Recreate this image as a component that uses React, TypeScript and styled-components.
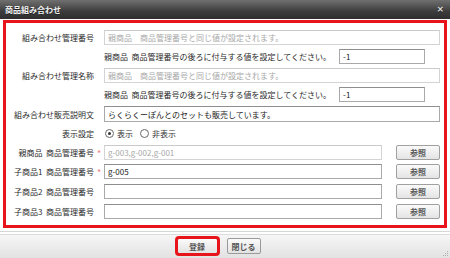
import React, { FC } from "react";
import styled, { createGlobalStyle } from "styled-components";

const GlobalStyle = createGlobalStyle`
  html, body { margin: 0; padding: 0; background: #fff; }
  body { font-family: "Noto Sans CJK JP", "Noto Sans", sans-serif; font-size: 8px; color: #333; }
  * { box-sizing: border-box; }
`;

const Window = styled.div`
  width: 450px;
  height: 258px;
  display: flex;
  flex-direction: column;
  background: #fff;
  overflow: hidden;
  position: relative;
`;

const TitleBar = styled.div`
  height: 19px;
  flex: none;
  display: flex;
  align-items: center;
  justify-content: space-between;
  padding: 0 6px 0 5px;
  background: linear-gradient(#707070, #3c3c3c 60%, #2e2e2e);
  color: #f2f2f2;
  font-weight: bold;
  font-size: 8px;
  text-shadow: 0 1px 0 #222;
`;

const CloseMark = styled.span`
  font-family: "DejaVu Sans", sans-serif;
  font-size: 9px;
  color: #ddd;
  line-height: 1;
`;

const Body = styled.div`
  flex: none;
  padding: 1px 3px 3px 3px;
  border-bottom: 1px solid #d6d6d6;
`;

const Highlight = styled.div`
  border: 3px solid #e8141c;
  height: 208px;
  padding: 7px 4px 0 0;
  display: flex;
  flex-direction: column;
  gap: 4px;
`;

const Row = styled.div<{ $h?: number; $mt?: number }>`
  display: grid;
  grid-template-columns: 88px 10px 1fr;
  align-items: center;
  height: ${(p) => p.$h ?? 15}px;
  margin-top: ${(p) => p.$mt ?? 0}px;
`;

const Label = styled.div`
  text-align: right;
  white-space: nowrap;
  color: #2a2a2a;
`;

const Required = styled.span`
  color: #f08080;
  text-align: center;
  font-size: 9px;
  padding-top: 2px;
`;

const Field = styled.div`
  display: flex;
  align-items: center;
  gap: 8px;
  height: 100%;
  min-width: 0;
`;

const Input = styled.input<{ $w?: number; $muted?: boolean }>`
  height: 100%;
  width: ${(p) => (p.$w ? `${p.$w}px` : "auto")};
  flex: ${(p) => (p.$w ? "none" : "1")};
  min-width: 0;
  margin: 0;
  padding: 0 3px;
  font-family: inherit;
  font-size: 8px;
  color: ${(p) => (p.$muted ? "#a8a8a8" : "#222")};
  background: #fff;
  border: 1px solid ${(p) => (p.$muted ? "#d4d4d4" : "#a9a9a9")};
  border-top-color: ${(p) => (p.$muted ? "#cacaca" : "#8e8e8e")};
  border-radius: 0;
  outline: none;
  &::placeholder { color: #a8a8a8; }
`;

const Hint = styled.span`
  white-space: nowrap;
  color: #2a2a2a;
`;

const RefButton = styled.button`
  flex: none;
  width: 44px;
  height: 15px;
  margin: 0 0 0 6px;
  padding: 0;
  font-family: inherit;
  font-size: 8px;
  font-weight: bold;
  color: #555;
  background: linear-gradient(#fafafa, #e4e4e4);
  border: 1px solid #a0a0a0;
  border-radius: 2px;
`;

const RadioGroup = styled.div`
  display: flex;
  align-items: center;
  gap: 3px;
  height: 100%;
`;

const RadioDot = styled.span<{ $on?: boolean }>`
  width: 9px;
  height: 9px;
  border-radius: 50%;
  border: 1px solid #6a6a6a;
  background: #fff;
  display: inline-flex;
  align-items: center;
  justify-content: center;
  margin-left: ${(p) => (p.$on ? 1 : 4)}px;
  &::after {
    content: "";
    width: 3px;
    height: 3px;
    border-radius: 50%;
    background: ${(p) => (p.$on ? "#333" : "transparent")};
  }
`;

const Footer = styled.div`
  flex: 1;
  margin-top: 2px;
  display: flex;
  align-items: center;
  justify-content: center;
  gap: 9px;
  padding: 0 13px 1px 0;
  background: linear-gradient(#f6f6f6, #e2e2e2);
  border-top: 1px solid #dcdcdc;
  position: relative;
`;

const FooterButton = styled.button<{ $w: number; $marked?: boolean }>`
  width: ${(p) => p.$w}px;
  height: 16px;
  margin: 0;
  padding: 0;
  font-family: inherit;
  font-size: 8px;
  font-weight: bold;
  color: #555;
  background: linear-gradient(#fbfbfb, #e2e2e2);
  border: 1px solid #9a9a9a;
  border-radius: 2px;
  outline: ${(p) => (p.$marked ? "3px solid #e8141c" : "none")};
  outline-offset: -1px;
`;

const Grip = styled.svg`
  position: absolute;
  right: 1px;
  bottom: 1px;
`;

interface RefRowProps {
  label: string;
  required?: boolean;
  value?: string;
  muted?: boolean;
  mt?: number;
}

const RefRow: FC<RefRowProps> = ({ label, required, value, muted, mt }) => (
  <Row $mt={mt}>
    <Label>{label}</Label>
    {required ? <Required>*</Required> : <span />}
    <Field>
      <Input $muted={muted} defaultValue={value} readOnly={muted} />
      <RefButton>参照</RefButton>
    </Field>
  </Row>
);

const HintRow: FC = () => (
  <Row>
    <span />
    <span />
    <Field>
      <Hint>親商品&nbsp;&nbsp;商品管理番号の後ろに付与する値を設定してください。</Hint>
      <Input $w={86} defaultValue="-1" />
    </Field>
  </Row>
);

export default function App() {
  return (
    <>
      <GlobalStyle />
      <Window>
        <TitleBar>
          <span>商品組み合わせ</span>
          <CloseMark>×</CloseMark>
        </TitleBar>
        <Body>
          <Highlight>
            <Row>
              <Label>組み合わせ管理番号</Label>
              <span />
              <Field>
                <Input $muted readOnly placeholder="親商品　商品管理番号と同じ値が設定されます。" />
              </Field>
            </Row>
            <HintRow />
            <Row>
              <Label>組み合わせ管理名称</Label>
              <span />
              <Field>
                <Input $muted readOnly placeholder="親商品　商品管理番号と同じ値が設定されます。" />
              </Field>
            </Row>
            <HintRow />
            <Row $h={16}>
              <Label>組み合わせ販売説明文</Label>
              <span />
              <Field>
                <Input defaultValue="らくらくーぽんとのセットも販売しています。" />
              </Field>
            </Row>
            <Row>
              <Label>表示設定</Label>
              <span />
              <RadioGroup>
                <RadioDot $on />
                <span>表示</span>
                <RadioDot />
                <span>非表示</span>
              </RadioGroup>
            </Row>
            <RefRow label={"親商品\u00a0\u00a0商品管理番号"} required muted value="g-003,g-002,g-001" />
            <RefRow label={"子商品1\u00a0\u00a0商品管理番号"} required value="g-005" />
            <RefRow label={"子商品2\u00a0\u00a0商品管理番号"} mt={1} />
            <RefRow label={"子商品3\u00a0\u00a0商品管理番号"} mt={1} />
          </Highlight>
        </Body>
        <Footer>
          <FooterButton $w={41} $marked>登録</FooterButton>
          <FooterButton $w={34}>閉じる</FooterButton>
          <Grip width="7" height="7" viewBox="0 0 7 7">
            <g fill="#b0b0b0">
              <rect x="5" y="1" width="1" height="1" />
              <rect x="3" y="3" width="1" height="1" />
              <rect x="5" y="3" width="1" height="1" />
              <rect x="1" y="5" width="1" height="1" />
              <rect x="3" y="5" width="1" height="1" />
              <rect x="5" y="5" width="1" height="1" />
            </g>
          </Grip>
        </Footer>
      </Window>
    </>
  );
}
